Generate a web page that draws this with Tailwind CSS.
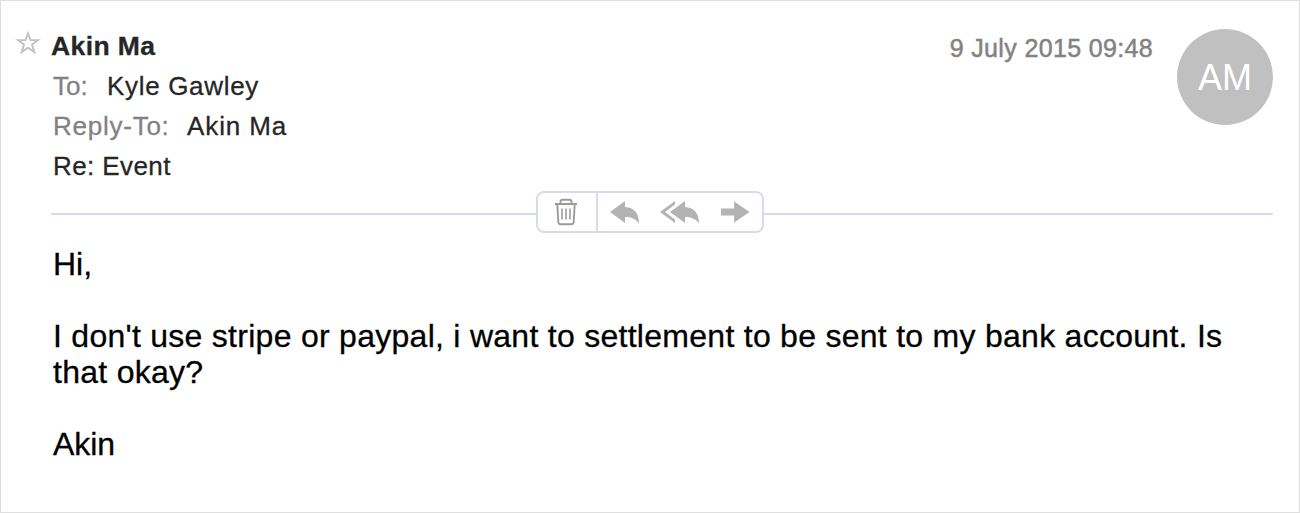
<!DOCTYPE html>
<html lang="en">
<head>
  <meta charset="utf-8">
  <title>Re: Event</title>
  <script src="https://cdn.jsdelivr.net/npm/@tailwindcss/browser@4"></script>
</head>
<body class="bg-white font-['Liberation_Sans',Arial,sans-serif]">
  <div class="h-screen border border-[#dedede] pt-[25px] pl-[14px] pr-[26px] overflow-hidden">
    <!-- Header -->
    <div class="flex h-[165px]">
      <svg class="w-[26px] h-[26px] mt-[4px] mr-[10px] shrink-0" viewBox="0 0 26 26" fill="none" stroke="#c2c2c2" stroke-width="1.9">
        <path d="M13 3.2L15.5 10.1H23L17 14.6L19.4 22.2L13 17.7L6.6 22.2L9 14.6L3 10.1H10.5Z"/>
      </svg>
      <div class="flex-1 text-[26px] leading-10 text-[#262626] whitespace-nowrap [-webkit-text-stroke:0.3px]">
        <h1 class="font-bold text-[26.5px] leading-10 tracking-[0.4px]">Akin Ma</h1>
        <div class="flex pl-[2px]">
          <span class="text-[#828282] w-[54px]">To:</span>
          <span class="tracking-[0.68px]">Kyle Gawley</span>
        </div>
        <div class="flex pl-[2px]">
          <span class="text-[#828282] w-[134px] tracking-[0.75px]">Reply-To:</span>
          <span class="tracking-[0.9px]">Akin Ma</span>
        </div>
        <div class="pl-[2px] tracking-[0.4px]">Re: Event</div>
      </div>
      <div class="text-[25px] leading-10 text-[#828282] mt-[2px] mr-[24px] whitespace-nowrap tracking-[0.35px] [-webkit-text-stroke:0.5px]">9 July 2015 09:48</div>
      <div class="w-24 h-24 mt-[3px] pt-[2px] rounded-full bg-[#c0c0c0] text-white text-[36px] flex items-center justify-center">AM</div>
    </div>

    <!-- Toolbar -->
    <div class="flex items-center ml-[36px]">
      <div class="w-[485px] h-[2px] mt-[4px] bg-[#d7dbed]"></div>
      <div class="w-[228px] h-[42px] border-2 border-[#d7dbed] rounded-lg flex">
        <button class="w-[60px] border-r-2 border-[#d7dbed] flex">
          <svg class="w-[58px] h-[38px]" viewBox="538 193 58 38" fill="none" stroke="#9b9b9b" stroke-width="1.9">
            <path d="M555 204H577M560.5 204V201.8Q560.5 199.8 562.5 199.8H569.5Q571.5 199.8 571.5 201.8V204M557.3 204L558.3 222Q558.4 224.2 560.6 224.2H571.4Q573.6 224.2 573.7 222L574.7 204"/>
            <path d="M562 208.5V219.5M566 208.5V219.5M570 208.5V219.5" stroke-width="1.6"/>
          </svg>
        </button>
        <svg class="w-[164px] h-[38px]" viewBox="598 193 164 38" fill="#b3b3b3">
          <path d="M610 212L625 201V207C634 207.5 639 213 639 223.5C635.5 218.5 631 217 625 217V223Z"/>
          <path d="M670 212L685 201V207C694 207.5 699 213 699 223.5C695.5 218.5 691 217 685 217V223Z"/>
          <path d="M660 212L675 201V204.6L665 212L675 219.4V223Z"/>
          <path d="M721 208.5H734V201.2L749.5 212L734 222.8V215.5H721Z"/>
        </svg>
      </div>
      <div class="flex-1 h-[2px] mt-[4px] bg-[#d7dbed]"></div>
    </div>

    <!-- Message -->
    <div class="ml-[38px] mt-[13px] text-[32px] leading-9 text-black whitespace-nowrap [-webkit-text-stroke:0.3px]">
      <p>Hi,</p>
      <p class="mt-9 tracking-[0.275px]">I don't use stripe or paypal, i want to settlement to be sent to my bank account. Is<br>that okay?</p>
      <p class="mt-9 tracking-[-0.1px]">Akin</p>
    </div>
  </div>
</body>
</html>
